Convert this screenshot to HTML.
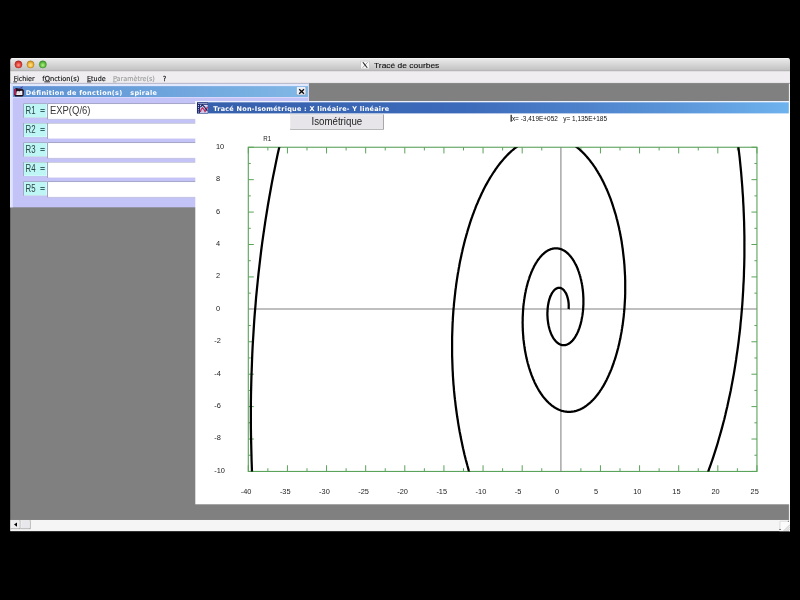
<!DOCTYPE html>
<html lang="fr">
<head>
<meta charset="utf-8">
<title>Tracé de courbes</title>
<style>
html,body{margin:0;padding:0;background:#000;}
body{width:800px;height:600px;overflow:hidden;font-family:"Liberation Sans",sans-serif;}
svg{display:block;will-change:transform;}
</style>
</head>
<body>
<svg width="800" height="600" viewBox="0 0 800 600">
<defs>
<linearGradient id="gtb" x1="0" y1="0" x2="0" y2="1"><stop offset="0" stop-color="#ececec"/><stop offset="0.45" stop-color="#d8d8d8"/><stop offset="1" stop-color="#bfbfbf"/></linearGradient>
<linearGradient id="gc1" x1="0" y1="0" x2="1" y2="0"><stop offset="0" stop-color="#5b8fd2"/><stop offset="1" stop-color="#80b8e6"/></linearGradient>
<linearGradient id="gc2" x1="0" y1="0" x2="1" y2="0"><stop offset="0" stop-color="#3660ac"/><stop offset="0.45" stop-color="#3c6aba"/><stop offset="0.8" stop-color="#5a94d8"/><stop offset="1" stop-color="#6eb2ee"/></linearGradient>
<radialGradient id="gr" cx="0.5" cy="0.6" r="0.6"><stop offset="0" stop-color="#ff9a8e"/><stop offset="0.55" stop-color="#e8443a"/><stop offset="1" stop-color="#b02a22"/></radialGradient>
<radialGradient id="gy" cx="0.5" cy="0.6" r="0.6"><stop offset="0" stop-color="#ffe690"/><stop offset="0.55" stop-color="#f2b83c"/><stop offset="1" stop-color="#bc8a22"/></radialGradient>
<radialGradient id="gg" cx="0.5" cy="0.6" r="0.6"><stop offset="0" stop-color="#bcf290"/><stop offset="0.55" stop-color="#64c442"/><stop offset="1" stop-color="#3e922a"/></radialGradient>
<clipPath id="fc"><rect x="248.30" y="147.25" width="508.65" height="324.20"/></clipPath>
<clipPath id="wc"><path d="M10.1 531.4 V60.4 Q10.1 57.9 12.6 57.9 H787.5 Q790 57.9 790 60.4 V531.4 Z"/></clipPath>
</defs>
<rect x="0.00" y="0.00" width="800.00" height="600.00" fill="#000" />
<g clip-path="url(#wc)">
<rect x="10.10" y="57.90" width="779.90" height="13.10" fill="url(#gtb)" />
<rect x="10.10" y="57.90" width="779.90" height="0.80" fill="#f6f6f6" />
<rect x="10.10" y="71.00" width="779.90" height="12.20" fill="#efedf0" />
<rect x="10.10" y="70.60" width="779.90" height="0.60" fill="#a8a8a8" />
<rect x="10.10" y="83.20" width="779.90" height="436.60" fill="#808080" />
<rect x="10.10" y="82.90" width="779.90" height="0.70" fill="#9a9a9a" />
<rect x="788.90" y="83.60" width="1.30" height="447.80" fill="#ededed" />
<rect x="10.10" y="519.80" width="780.10" height="11.60" fill="#f5f5f5" />
<circle cx="18.45" cy="64.4" r="3.55" fill="url(#gr)" stroke="#9c2a22" stroke-width="0.5"/>
<circle cx="30.50" cy="64.4" r="3.55" fill="url(#gy)" stroke="#a87c20" stroke-width="0.5"/>
<circle cx="42.80" cy="64.4" r="3.55" fill="url(#gg)" stroke="#3c8428" stroke-width="0.5"/>
<rect x="360.80" y="61.10" width="8.40" height="7.80" fill="#f8f8f8" stroke="#b8b8b8" stroke-width="0.5"/>
<path d="M362.3 62.3 L363.6 62.3 L367.8 67.8 L366.5 67.8 Z" fill="#222"/>
<path d="M367.6 62.3 L362.5 67.8" stroke="#333" stroke-width="0.45" fill="none"/>
<text x="374.00" y="67.60" font-family="'Liberation Sans', sans-serif" font-size="8.00" font-weight="normal" fill="#111" textLength="65.30" lengthAdjust="spacingAndGlyphs" stroke="#111" stroke-width="0.12">Tracé de courbes</text>
<text x="13.80" y="80.50" font-family="'DejaVu Sans Condensed', 'DejaVu Sans', sans-serif" font-size="6.9" fill="#111" stroke="#111" stroke-width="0.14" textLength="20.90" lengthAdjust="spacingAndGlyphs"><tspan text-decoration="underline">F</tspan>ichier</text>
<text x="42.35" y="80.50" font-family="'DejaVu Sans Condensed', 'DejaVu Sans', sans-serif" font-size="6.9" fill="#111" stroke="#111" stroke-width="0.14" textLength="36.90" lengthAdjust="spacingAndGlyphs">f<tspan text-decoration="underline">O</tspan>nction(s)</text>
<text x="87.10" y="80.50" font-family="'DejaVu Sans Condensed', 'DejaVu Sans', sans-serif" font-size="6.9" fill="#111" stroke="#111" stroke-width="0.14" textLength="18.50" lengthAdjust="spacingAndGlyphs"><tspan text-decoration="underline">E</tspan>tude</text>
<text x="113.00" y="80.50" font-family="'DejaVu Sans Condensed', 'DejaVu Sans', sans-serif" font-size="6.9" fill="#9e9e9e" stroke="#9e9e9e" stroke-width="0.14" textLength="41.80" lengthAdjust="spacingAndGlyphs"><tspan text-decoration="underline">P</tspan>aramètre(s)</text>
<text x="163.00" y="80.50" font-family="'DejaVu Sans Condensed', 'DejaVu Sans', sans-serif" font-size="6.90" font-weight="normal" fill="#222" stroke="#222" stroke-width="0.25">?</text>
<rect x="10.10" y="83.60" width="298.90" height="123.70" fill="#c3c3f8" />
<rect x="10.10" y="83.60" width="298.90" height="2.70" fill="#e2e9fc" />
<rect x="10.10" y="83.60" width="2.80" height="123.70" fill="#dbe1fb" />
<rect x="10.10" y="83.60" width="1.10" height="123.70" fill="#e6eafc" />
<rect x="308.00" y="83.60" width="1.00" height="123.70" fill="#d4d8fa" />
<rect x="12.90" y="86.20" width="295.10" height="10.90" fill="url(#gc1)" />
<rect x="12.90" y="97.10" width="295.10" height="0.90" fill="#dcdcfb" />
<g>
<path d="M14.0 89.4 L16.1 88.1 L18.5 88.5 L22.4 88.7 L23.9 90.5 L23.7 95.2 L22.3 96.4 L15.2 96.4 L14.0 94.6 Z" fill="#21101c"/>
<path d="M14.15 89.6 L15.9 88.6 L16.0 94.9 L15.0 95.1 L14.15 94.0 Z" fill="#b4225e"/>
<path d="M16.7 91.2 L22.3 90.7 L22.4 94.9 L16.2 95.1 Z" fill="#f6f0f6"/>
<path d="M19.0 88.9 L22.7 86.8" stroke="#5a32a0" stroke-width="1"/>
<circle cx="19.3" cy="90.8" r="0.7" fill="#140a18"/>
<path d="M17.2 93.4 L19.4 92.6 L20.6 93.6" stroke="#b8a8b8" stroke-width="0.5" fill="none"/>
</g>
<text x="25.85" y="94.50" font-family="'DejaVu Sans', 'Liberation Sans', sans-serif" font-size="6.50" font-weight="bold" fill="#fff" textLength="131.15" lengthAdjust="spacing" xml:space="preserve">Définition de fonction(s)   spirale</text>
<rect x="296.85" y="87.10" width="9.30" height="8.10" fill="#7c8ca8" />
<rect x="296.85" y="87.10" width="8.55" height="7.35" fill="#fbfbff" />
<rect x="297.50" y="87.70" width="7.90" height="6.75" fill="#ececf4" />
<path d="M299.2 89.3 L304 93.7 M304 89.3 L299.2 93.7" stroke="#0a0a0a" stroke-width="1.35" fill="none"/>
<rect x="23.40" y="103.50" width="23.60" height="14.10" fill="#8c9ca0" />
<rect x="24.00" y="104.10" width="23.00" height="13.50" fill="#e4ffff" />
<rect x="24.00" y="104.10" width="22.50" height="13.00" fill="#bef6f6" />
<text font-family="'Liberation Sans', sans-serif" fill="#2a4444"><tspan x="25.5" y="113.75" font-size="10.4" textLength="10" lengthAdjust="spacingAndGlyphs">R1</tspan><tspan x="40.2" y="112.60" font-size="8" fill="#3c6464" stroke="#3c6464" stroke-width="0.35" textLength="4.6" lengthAdjust="spacingAndGlyphs">=</tspan></text>
<rect x="47.40" y="103.50" width="259.00" height="15.90" fill="#8c8c9c" />
<rect x="48.10" y="104.10" width="258.30" height="15.30" fill="#ececff" />
<rect x="48.10" y="104.10" width="257.70" height="14.50" fill="#ffffff" />
<text x="49.90" y="114.25" font-family="'Liberation Sans', sans-serif" font-size="10.10" font-weight="normal" fill="#383838" textLength="40.60" lengthAdjust="spacingAndGlyphs" >EXP(Q/6)</text>
<rect x="23.40" y="123.00" width="23.60" height="14.10" fill="#8c9ca0" />
<rect x="24.00" y="123.60" width="23.00" height="13.50" fill="#e4ffff" />
<rect x="24.00" y="123.60" width="22.50" height="13.00" fill="#bef6f6" />
<text font-family="'Liberation Sans', sans-serif" fill="#2a4444"><tspan x="25.5" y="133.25" font-size="10.4" textLength="10" lengthAdjust="spacingAndGlyphs">R2</tspan><tspan x="40.2" y="132.10" font-size="8" fill="#3c6464" stroke="#3c6464" stroke-width="0.35" textLength="4.6" lengthAdjust="spacingAndGlyphs">=</tspan></text>
<rect x="47.40" y="123.00" width="259.00" height="15.90" fill="#8c8c9c" />
<rect x="48.10" y="123.60" width="258.30" height="15.30" fill="#ececff" />
<rect x="48.10" y="123.60" width="257.70" height="14.50" fill="#ffffff" />
<rect x="23.40" y="142.50" width="23.60" height="14.10" fill="#8c9ca0" />
<rect x="24.00" y="143.10" width="23.00" height="13.50" fill="#e4ffff" />
<rect x="24.00" y="143.10" width="22.50" height="13.00" fill="#bef6f6" />
<text font-family="'Liberation Sans', sans-serif" fill="#2a4444"><tspan x="25.5" y="152.75" font-size="10.4" textLength="10" lengthAdjust="spacingAndGlyphs">R3</tspan><tspan x="40.2" y="151.60" font-size="8" fill="#3c6464" stroke="#3c6464" stroke-width="0.35" textLength="4.6" lengthAdjust="spacingAndGlyphs">=</tspan></text>
<rect x="47.40" y="142.50" width="259.00" height="15.90" fill="#8c8c9c" />
<rect x="48.10" y="143.10" width="258.30" height="15.30" fill="#ececff" />
<rect x="48.10" y="143.10" width="257.70" height="14.50" fill="#ffffff" />
<rect x="23.40" y="162.00" width="23.60" height="14.10" fill="#8c9ca0" />
<rect x="24.00" y="162.60" width="23.00" height="13.50" fill="#e4ffff" />
<rect x="24.00" y="162.60" width="22.50" height="13.00" fill="#bef6f6" />
<text font-family="'Liberation Sans', sans-serif" fill="#2a4444"><tspan x="25.5" y="172.25" font-size="10.4" textLength="10" lengthAdjust="spacingAndGlyphs">R4</tspan><tspan x="40.2" y="171.10" font-size="8" fill="#3c6464" stroke="#3c6464" stroke-width="0.35" textLength="4.6" lengthAdjust="spacingAndGlyphs">=</tspan></text>
<rect x="47.40" y="162.00" width="259.00" height="15.90" fill="#8c8c9c" />
<rect x="48.10" y="162.60" width="258.30" height="15.30" fill="#ececff" />
<rect x="48.10" y="162.60" width="257.70" height="14.50" fill="#ffffff" />
<rect x="23.40" y="181.50" width="23.60" height="14.10" fill="#8c9ca0" />
<rect x="24.00" y="182.10" width="23.00" height="13.50" fill="#e4ffff" />
<rect x="24.00" y="182.10" width="22.50" height="13.00" fill="#bef6f6" />
<text font-family="'Liberation Sans', sans-serif" fill="#2a4444"><tspan x="25.5" y="191.75" font-size="10.4" textLength="10" lengthAdjust="spacingAndGlyphs">R5</tspan><tspan x="40.2" y="190.60" font-size="8" fill="#3c6464" stroke="#3c6464" stroke-width="0.35" textLength="4.6" lengthAdjust="spacingAndGlyphs">=</tspan></text>
<rect x="47.40" y="181.50" width="259.00" height="15.90" fill="#8c8c9c" />
<rect x="48.10" y="182.10" width="258.30" height="15.30" fill="#ececff" />
<rect x="48.10" y="182.10" width="257.70" height="14.50" fill="#ffffff" />
<rect x="195.30" y="101.00" width="594.90" height="403.30" fill="#ffffff" />
<rect x="195.30" y="101.00" width="594.90" height="1.30" fill="#eef2fc" />
<rect x="196.95" y="102.30" width="591.85" height="11.10" fill="url(#gc2)" />
<rect x="197.00" y="102.40" width="10.90" height="11.00" fill="#1c2a72" />
<rect x="198.00" y="102.90" width="9.60" height="1.10" fill="#8a98c0" />
<rect x="200.00" y="105.00" width="7.70" height="8.00" fill="#c8c8ec" />
<rect x="198.00" y="105.00" width="1.00" height="0.80" fill="#e8ecff" />
<rect x="198.00" y="107.20" width="1.00" height="0.80" fill="#e8ecff" />
<rect x="198.00" y="109.40" width="1.00" height="0.80" fill="#e8ecff" />
<rect x="198.00" y="111.60" width="1.00" height="0.80" fill="#e8ecff" />
<rect x="200.00" y="104.80" width="7.60" height="0.80" fill="#e8ecff" />
<path d="M200.3 112 L201.2 109.4 L202.6 108 L204 109.6 L205 111.6 L206 110 L207.4 107" stroke="#c02c58" stroke-width="1.2" fill="none"/>
<path d="M200.4 107.2 L202.4 104.8 L204.6 107 L206.4 109.8 L207.4 110.6" stroke="#18205e" stroke-width="1.1" fill="none"/>
<text x="213.20" y="111.00" font-family="'DejaVu Sans', 'Liberation Sans', sans-serif" font-size="6.50" font-weight="bold" fill="#fff" textLength="176.00" lengthAdjust="spacing" >Tracé Non-Isométrique : X linéaire- Y linéaire</text>
<rect x="290.20" y="114.50" width="93.70" height="15.10" fill="#8c8c8c" />
<rect x="290.20" y="114.50" width="92.90" height="14.30" fill="#ffffff" />
<rect x="290.90" y="115.20" width="92.20" height="13.60" fill="#e7e5ea" />
<text x="311.50" y="125.00" font-family="'Liberation Sans', sans-serif" font-size="10.40" font-weight="normal" fill="#222" textLength="50.70" lengthAdjust="spacingAndGlyphs" >Isométrique</text>
<rect x="510.60" y="114.80" width="1.10" height="6.90" fill="#000" />
<text x="511.90" y="120.80" font-family="'Liberation Sans', sans-serif" font-size="6.90" font-weight="normal" fill="#111" textLength="95.10" lengthAdjust="spacingAndGlyphs" xml:space="preserve">x= -3,419E+052   y= 1,135E+185</text>
<path d="M248.30 147.25 v6.2 M248.30 471.45 v-6.2 M267.86 147.25 v3.2 M267.86 471.45 v-3.2 M287.43 147.25 v6.2 M287.43 471.45 v-6.2 M306.99 147.25 v3.2 M306.99 471.45 v-3.2 M326.55 147.25 v6.2 M326.55 471.45 v-6.2 M346.12 147.25 v3.2 M346.12 471.45 v-3.2 M365.68 147.25 v6.2 M365.68 471.45 v-6.2 M385.24 147.25 v3.2 M385.24 471.45 v-3.2 M404.81 147.25 v6.2 M404.81 471.45 v-6.2 M424.37 147.25 v3.2 M424.37 471.45 v-3.2 M443.93 147.25 v6.2 M443.93 471.45 v-6.2 M463.50 147.25 v3.2 M463.50 471.45 v-3.2 M483.06 147.25 v6.2 M483.06 471.45 v-6.2 M502.62 147.25 v3.2 M502.62 471.45 v-3.2 M522.19 147.25 v6.2 M522.19 471.45 v-6.2 M541.75 147.25 v3.2 M541.75 471.45 v-3.2 M580.88 147.25 v3.2 M580.88 471.45 v-3.2 M600.44 147.25 v6.2 M600.44 471.45 v-6.2 M620.01 147.25 v3.2 M620.01 471.45 v-3.2 M639.57 147.25 v6.2 M639.57 471.45 v-6.2 M659.13 147.25 v3.2 M659.13 471.45 v-3.2 M678.70 147.25 v6.2 M678.70 471.45 v-6.2 M698.26 147.25 v3.2 M698.26 471.45 v-3.2 M717.82 147.25 v6.2 M717.82 471.45 v-6.2 M737.39 147.25 v3.2 M737.39 471.45 v-3.2 M756.95 147.25 v6.2 M756.95 471.45 v-6.2 M248.30 471.45 h5.5 M756.95 471.45 h-5.5 M248.30 455.24 h2.5 M756.95 455.24 h-2.5 M248.30 439.03 h5.5 M756.95 439.03 h-5.5 M248.30 422.82 h2.5 M756.95 422.82 h-2.5 M248.30 406.61 h5.5 M756.95 406.61 h-5.5 M248.30 390.40 h2.5 M756.95 390.40 h-2.5 M248.30 374.19 h5.5 M756.95 374.19 h-5.5 M248.30 357.98 h2.5 M756.95 357.98 h-2.5 M248.30 341.77 h5.5 M756.95 341.77 h-5.5 M248.30 325.56 h2.5 M756.95 325.56 h-2.5 M248.30 293.14 h2.5 M756.95 293.14 h-2.5 M248.30 276.93 h5.5 M756.95 276.93 h-5.5 M248.30 260.72 h2.5 M756.95 260.72 h-2.5 M248.30 244.51 h5.5 M756.95 244.51 h-5.5 M248.30 228.30 h2.5 M756.95 228.30 h-2.5 M248.30 212.09 h5.5 M756.95 212.09 h-5.5 M248.30 195.88 h2.5 M756.95 195.88 h-2.5 M248.30 179.67 h5.5 M756.95 179.67 h-5.5 M248.30 163.46 h2.5 M756.95 163.46 h-2.5 M248.30 147.25 h5.5 M756.95 147.25 h-5.5" stroke="#5aa35a" stroke-width="1" fill="none"/>
<rect x="248.30" y="147.25" width="508.65" height="324.20" fill="none" stroke="#5aa35a" stroke-width="1.1"/>
<line x1="248.30" y1="308.90" x2="756.95" y2="308.90" stroke="#808080" stroke-width="1.05"/>
<line x1="560.92" y1="147.25" x2="560.92" y2="471.45" stroke="#808080" stroke-width="1.05"/>
<g clip-path="url(#fc)"><path d="M569.1 309.3 L569.2 309.1 L569.2 308.9 L569.2 308.7 L569.2 308.5 L569.2 308.3 L569.2 308.1 L569.2 307.9 L569.2 307.7 L569.2 307.5 L569.2 307.3 L569.2 307.1 L569.2 306.9 L569.2 306.6 L569.2 306.4 L569.2 306.2 L569.2 306.0 L569.2 305.8 L569.2 305.6 L569.2 305.4 L569.2 305.1 L569.2 304.9 L569.2 304.7 L569.2 304.5 L569.2 304.3 L569.2 304.1 L569.1 303.9 L569.1 303.6 L569.1 303.4 L569.1 303.2 L569.1 303.0 L569.0 302.8 L569.0 302.6 L569.0 302.4 L569.0 302.1 L568.9 301.9 L568.9 301.7 L568.9 301.5 L568.8 301.3 L568.8 301.1 L568.8 300.9 L568.7 300.6 L568.7 300.4 L568.7 300.2 L568.6 300.0 L568.6 299.8 L568.5 299.6 L568.5 299.4 L568.4 299.2 L568.4 299.0 L568.3 298.8 L568.3 298.6 L568.2 298.4 L568.2 298.2 L568.1 298.0 L568.1 297.8 L568.0 297.6 L568.0 297.4 L567.9 297.2 L567.8 297.0 L567.8 296.8 L567.7 296.6 L567.7 296.4 L567.6 296.2 L567.5 296.0 L567.5 295.8 L567.4 295.6 L567.3 295.4 L567.2 295.3 L567.2 295.1 L567.1 294.9 L567.0 294.7 L566.9 294.5 L566.9 294.4 L566.8 294.2 L566.7 294.0 L566.6 293.8 L566.5 293.7 L566.4 293.5 L566.4 293.3 L566.3 293.2 L566.2 293.0 L566.1 292.8 L566.0 292.7 L565.9 292.5 L565.8 292.4 L565.7 292.2 L565.6 292.1 L565.5 291.9 L565.4 291.8 L565.3 291.6 L565.2 291.5 L565.1 291.4 L565.0 291.2 L564.9 291.1 L564.8 291.0 L564.7 290.8 L564.6 290.7 L564.5 290.6 L564.4 290.5 L564.3 290.3 L564.2 290.2 L564.1 290.1 L564.0 290.0 L563.9 289.9 L563.7 289.8 L563.6 289.7 L563.5 289.6 L563.4 289.5 L563.3 289.4 L563.2 289.3 L563.0 289.2 L562.9 289.1 L562.8 289.0 L562.7 289.0 L562.6 288.9 L562.4 288.8 L562.3 288.7 L562.2 288.7 L562.1 288.6 L561.9 288.5 L561.8 288.5 L561.7 288.4 L561.6 288.4 L561.4 288.3 L561.3 288.3 L561.2 288.2 L561.1 288.2 L560.9 288.2 L560.8 288.1 L560.7 288.1 L560.5 288.1 L560.4 288.1 L560.3 288.0 L560.1 288.0 L560.0 288.0 L559.9 288.0 L559.7 288.0 L559.6 288.0 L559.5 288.0 L559.3 288.0 L559.2 288.0 L559.1 288.0 L558.9 288.0 L558.8 288.1 L558.7 288.1 L558.5 288.1 L558.4 288.1 L558.3 288.2 L558.1 288.2 L558.0 288.2 L557.9 288.3 L557.7 288.3 L557.6 288.4 L557.5 288.4 L557.3 288.5 L557.2 288.6 L557.1 288.6 L556.9 288.7 L556.8 288.8 L556.7 288.8 L556.5 288.9 L556.4 289.0 L556.3 289.1 L556.1 289.2 L556.0 289.3 L555.9 289.4 L555.7 289.5 L555.6 289.6 L555.5 289.7 L555.3 289.8 L555.2 289.9 L555.1 290.0 L554.9 290.2 L554.8 290.3 L554.7 290.4 L554.6 290.6 L554.4 290.7 L554.3 290.8 L554.2 291.0 L554.0 291.1 L553.9 291.3 L553.8 291.5 L553.7 291.6 L553.5 291.8 L553.4 291.9 L553.3 292.1 L553.2 292.3 L553.1 292.5 L552.9 292.6 L552.8 292.8 L552.7 293.0 L552.6 293.2 L552.5 293.4 L552.4 293.6 L552.2 293.8 L552.1 294.0 L552.0 294.2 L551.9 294.4 L551.8 294.6 L551.7 294.9 L551.6 295.1 L551.5 295.3 L551.4 295.5 L551.3 295.8 L551.2 296.0 L551.1 296.2 L551.0 296.5 L550.9 296.7 L550.8 297.0 L550.7 297.2 L550.6 297.5 L550.5 297.7 L550.4 298.0 L550.3 298.3 L550.2 298.5 L550.1 298.8 L550.0 299.1 L549.9 299.3 L549.9 299.6 L549.8 299.9 L549.7 300.2 L549.6 300.5 L549.5 300.7 L549.5 301.0 L549.4 301.3 L549.3 301.6 L549.2 301.9 L549.2 302.2 L549.1 302.5 L549.0 302.8 L549.0 303.1 L548.9 303.4 L548.9 303.8 L548.8 304.1 L548.7 304.4 L548.7 304.7 L548.6 305.0 L548.6 305.3 L548.5 305.7 L548.5 306.0 L548.4 306.3 L548.4 306.6 L548.3 307.0 L548.3 307.3 L548.3 307.6 L548.2 308.0 L548.2 308.3 L548.2 308.7 L548.1 309.0 L548.1 309.3 L548.1 309.7 L548.1 310.0 L548.0 310.4 L548.0 310.7 L548.0 311.1 L548.0 311.4 L548.0 311.8 L548.0 312.1 L547.9 312.5 L547.9 312.9 L547.9 313.2 L547.9 313.6 L547.9 313.9 L547.9 314.3 L547.9 314.6 L547.9 315.0 L547.9 315.4 L547.9 315.7 L548.0 316.1 L548.0 316.4 L548.0 316.8 L548.0 317.2 L548.0 317.5 L548.1 317.9 L548.1 318.3 L548.1 318.6 L548.1 319.0 L548.2 319.4 L548.2 319.7 L548.2 320.1 L548.3 320.4 L548.3 320.8 L548.4 321.2 L548.4 321.5 L548.5 321.9 L548.5 322.2 L548.6 322.6 L548.6 323.0 L548.7 323.3 L548.7 323.7 L548.8 324.0 L548.9 324.4 L548.9 324.8 L549.0 325.1 L549.1 325.5 L549.1 325.8 L549.2 326.2 L549.3 326.5 L549.4 326.9 L549.4 327.2 L549.5 327.6 L549.6 327.9 L549.7 328.2 L549.8 328.6 L549.9 328.9 L550.0 329.3 L550.1 329.6 L550.2 329.9 L550.3 330.3 L550.4 330.6 L550.5 330.9 L550.6 331.2 L550.7 331.6 L550.8 331.9 L551.0 332.2 L551.1 332.5 L551.2 332.8 L551.3 333.1 L551.4 333.5 L551.6 333.8 L551.7 334.1 L551.8 334.4 L552.0 334.7 L552.1 335.0 L552.2 335.3 L552.4 335.5 L552.5 335.8 L552.7 336.1 L552.8 336.4 L552.9 336.7 L553.1 336.9 L553.2 337.2 L553.4 337.5 L553.6 337.7 L553.7 338.0 L553.9 338.3 L554.0 338.5 L554.2 338.8 L554.4 339.0 L554.5 339.2 L554.7 339.5 L554.9 339.7 L555.0 339.9 L555.2 340.2 L555.4 340.4 L555.6 340.6 L555.7 340.8 L555.9 341.0 L556.1 341.2 L556.3 341.4 L556.5 341.6 L556.7 341.8 L556.8 342.0 L557.0 342.2 L557.2 342.4 L557.4 342.5 L557.6 342.7 L557.8 342.9 L558.0 343.0 L558.2 343.2 L558.4 343.3 L558.6 343.5 L558.8 343.6 L559.0 343.8 L559.2 343.9 L559.4 344.0 L559.6 344.1 L559.8 344.3 L560.0 344.4 L560.2 344.5 L560.5 344.6 L560.7 344.7 L560.9 344.7 L561.1 344.8 L561.3 344.9 L561.5 345.0 L561.7 345.0 L562.0 345.1 L562.2 345.2 L562.4 345.2 L562.6 345.3 L562.8 345.3 L563.1 345.3 L563.3 345.3 L563.5 345.4 L563.7 345.4 L564.0 345.4 L564.2 345.4 L564.4 345.4 L564.6 345.4 L564.9 345.4 L565.1 345.4 L565.3 345.3 L565.5 345.3 L565.8 345.3 L566.0 345.2 L566.2 345.2 L566.4 345.1 L566.7 345.0 L566.9 345.0 L567.1 344.9 L567.4 344.8 L567.6 344.7 L567.8 344.6 L568.0 344.6 L568.3 344.4 L568.5 344.3 L568.7 344.2 L569.0 344.1 L569.2 344.0 L569.4 343.8 L569.6 343.7 L569.9 343.5 L570.1 343.4 L570.3 343.2 L570.5 343.1 L570.8 342.9 L571.0 342.7 L571.2 342.5 L571.4 342.3 L571.6 342.1 L571.9 341.9 L572.1 341.7 L572.3 341.5 L572.5 341.3 L572.7 341.1 L572.9 340.8 L573.2 340.6 L573.4 340.3 L573.6 340.1 L573.8 339.8 L574.0 339.6 L574.2 339.3 L574.4 339.0 L574.6 338.7 L574.8 338.4 L575.0 338.2 L575.3 337.9 L575.5 337.5 L575.7 337.2 L575.8 336.9 L576.0 336.6 L576.2 336.3 L576.4 335.9 L576.6 335.6 L576.8 335.2 L577.0 334.9 L577.2 334.5 L577.4 334.2 L577.6 333.8 L577.7 333.4 L577.9 333.0 L578.1 332.7 L578.3 332.3 L578.5 331.9 L578.6 331.5 L578.8 331.1 L579.0 330.7 L579.1 330.2 L579.3 329.8 L579.4 329.4 L579.6 329.0 L579.8 328.5 L579.9 328.1 L580.1 327.6 L580.2 327.2 L580.4 326.7 L580.5 326.3 L580.6 325.8 L580.8 325.3 L580.9 324.8 L581.1 324.4 L581.2 323.9 L581.3 323.4 L581.4 322.9 L581.6 322.4 L581.7 321.9 L581.8 321.4 L581.9 320.9 L582.0 320.4 L582.1 319.8 L582.2 319.3 L582.3 318.8 L582.4 318.3 L582.5 317.7 L582.6 317.2 L582.7 316.7 L582.8 316.1 L582.9 315.6 L583.0 315.0 L583.1 314.5 L583.1 313.9 L583.2 313.3 L583.3 312.8 L583.3 312.2 L583.4 311.7 L583.5 311.1 L583.5 310.5 L583.6 309.9 L583.6 309.3 L583.7 308.8 L583.7 308.2 L583.7 307.6 L583.8 307.0 L583.8 306.4 L583.8 305.8 L583.9 305.2 L583.9 304.6 L583.9 304.0 L583.9 303.4 L583.9 302.8 L583.9 302.2 L583.9 301.6 L583.9 301.0 L583.9 300.4 L583.9 299.8 L583.9 299.2 L583.9 298.6 L583.9 298.0 L583.8 297.4 L583.8 296.8 L583.8 296.1 L583.7 295.5 L583.7 294.9 L583.7 294.3 L583.6 293.7 L583.6 293.1 L583.5 292.5 L583.5 291.9 L583.4 291.2 L583.3 290.6 L583.3 290.0 L583.2 289.4 L583.1 288.8 L583.0 288.2 L582.9 287.6 L582.9 287.0 L582.8 286.4 L582.7 285.8 L582.6 285.2 L582.5 284.5 L582.4 283.9 L582.2 283.3 L582.1 282.7 L582.0 282.2 L581.9 281.6 L581.8 281.0 L581.6 280.4 L581.5 279.8 L581.3 279.2 L581.2 278.6 L581.1 278.0 L580.9 277.5 L580.8 276.9 L580.6 276.3 L580.4 275.7 L580.3 275.2 L580.1 274.6 L579.9 274.1 L579.7 273.5 L579.6 272.9 L579.4 272.4 L579.2 271.8 L579.0 271.3 L578.8 270.8 L578.6 270.2 L578.4 269.7 L578.2 269.2 L578.0 268.7 L577.8 268.1 L577.6 267.6 L577.3 267.1 L577.1 266.6 L576.9 266.1 L576.7 265.6 L576.4 265.1 L576.2 264.7 L575.9 264.2 L575.7 263.7 L575.4 263.2 L575.2 262.8 L574.9 262.3 L574.7 261.9 L574.4 261.4 L574.2 261.0 L573.9 260.6 L573.6 260.1 L573.3 259.7 L573.1 259.3 L572.8 258.9 L572.5 258.5 L572.2 258.1 L571.9 257.7 L571.6 257.3 L571.3 256.9 L571.0 256.6 L570.7 256.2 L570.4 255.9 L570.1 255.5 L569.8 255.2 L569.5 254.9 L569.2 254.5 L568.9 254.2 L568.5 253.9 L568.2 253.6 L567.9 253.3 L567.6 253.0 L567.2 252.7 L566.9 252.5 L566.6 252.2 L566.2 252.0 L565.9 251.7 L565.6 251.5 L565.2 251.3 L564.9 251.0 L564.5 250.8 L564.2 250.6 L563.8 250.4 L563.5 250.3 L563.1 250.1 L562.8 249.9 L562.4 249.8 L562.0 249.6 L561.7 249.5 L561.3 249.3 L561.0 249.2 L560.6 249.1 L560.2 249.0 L559.8 248.9 L559.5 248.8 L559.1 248.7 L558.7 248.7 L558.4 248.6 L558.0 248.6 L557.6 248.5 L557.2 248.5 L556.9 248.5 L556.5 248.5 L556.1 248.5 L555.7 248.5 L555.3 248.5 L555.0 248.6 L554.6 248.6 L554.2 248.7 L553.8 248.7 L553.4 248.8 L553.0 248.9 L552.6 249.0 L552.3 249.1 L551.9 249.2 L551.5 249.3 L551.1 249.5 L550.7 249.6 L550.3 249.8 L550.0 249.9 L549.6 250.1 L549.2 250.3 L548.8 250.5 L548.4 250.7 L548.0 250.9 L547.7 251.1 L547.3 251.4 L546.9 251.6 L546.5 251.9 L546.1 252.2 L545.8 252.4 L545.4 252.7 L545.0 253.0 L544.6 253.3 L544.3 253.7 L543.9 254.0 L543.5 254.3 L543.1 254.7 L542.8 255.1 L542.4 255.4 L542.0 255.8 L541.7 256.2 L541.3 256.6 L541.0 257.0 L540.6 257.5 L540.2 257.9 L539.9 258.3 L539.5 258.8 L539.2 259.3 L538.8 259.7 L538.5 260.2 L538.1 260.7 L537.8 261.2 L537.5 261.7 L537.1 262.3 L536.8 262.8 L536.4 263.4 L536.1 263.9 L535.8 264.5 L535.5 265.1 L535.1 265.6 L534.8 266.2 L534.5 266.8 L534.2 267.4 L533.9 268.1 L533.6 268.7 L533.3 269.3 L533.0 270.0 L532.7 270.7 L532.4 271.3 L532.1 272.0 L531.8 272.7 L531.5 273.4 L531.3 274.1 L531.0 274.8 L530.7 275.5 L530.4 276.3 L530.2 277.0 L529.9 277.7 L529.7 278.5 L529.4 279.3 L529.2 280.0 L528.9 280.8 L528.7 281.6 L528.4 282.4 L528.2 283.2 L528.0 284.0 L527.8 284.8 L527.6 285.6 L527.3 286.5 L527.1 287.3 L526.9 288.2 L526.7 289.0 L526.5 289.9 L526.3 290.8 L526.2 291.6 L526.0 292.5 L525.8 293.4 L525.6 294.3 L525.5 295.2 L525.3 296.1 L525.2 297.0 L525.0 297.9 L524.9 298.9 L524.7 299.8 L524.6 300.7 L524.5 301.7 L524.4 302.6 L524.2 303.5 L524.1 304.5 L524.0 305.5 L523.9 306.4 L523.8 307.4 L523.8 308.4 L523.7 309.3 L523.6 310.3 L523.5 311.3 L523.5 312.3 L523.4 313.3 L523.4 314.3 L523.3 315.3 L523.3 316.3 L523.2 317.3 L523.2 318.3 L523.2 319.3 L523.2 320.3 L523.2 321.4 L523.1 322.4 L523.1 323.4 L523.2 324.4 L523.2 325.5 L523.2 326.5 L523.2 327.5 L523.3 328.5 L523.3 329.6 L523.3 330.6 L523.4 331.6 L523.5 332.7 L523.5 333.7 L523.6 334.7 L523.7 335.8 L523.8 336.8 L523.8 337.8 L523.9 338.9 L524.0 339.9 L524.2 341.0 L524.3 342.0 L524.4 343.0 L524.5 344.0 L524.7 345.1 L524.8 346.1 L525.0 347.1 L525.1 348.2 L525.3 349.2 L525.4 350.2 L525.6 351.2 L525.8 352.2 L526.0 353.2 L526.2 354.3 L526.4 355.3 L526.6 356.3 L526.8 357.3 L527.0 358.3 L527.3 359.3 L527.5 360.2 L527.7 361.2 L528.0 362.2 L528.2 363.2 L528.5 364.2 L528.8 365.1 L529.0 366.1 L529.3 367.0 L529.6 368.0 L529.9 368.9 L530.2 369.9 L530.5 370.8 L530.8 371.7 L531.1 372.7 L531.5 373.6 L531.8 374.5 L532.1 375.4 L532.5 376.3 L532.8 377.2 L533.2 378.0 L533.5 378.9 L533.9 379.8 L534.3 380.6 L534.7 381.5 L535.0 382.3 L535.4 383.2 L535.8 384.0 L536.2 384.8 L536.6 385.6 L537.0 386.4 L537.5 387.2 L537.9 388.0 L538.3 388.7 L538.8 389.5 L539.2 390.3 L539.6 391.0 L540.1 391.7 L540.6 392.4 L541.0 393.2 L541.5 393.9 L542.0 394.5 L542.4 395.2 L542.9 395.9 L543.4 396.5 L543.9 397.2 L544.4 397.8 L544.9 398.4 L545.4 399.0 L545.9 399.6 L546.5 400.2 L547.0 400.8 L547.5 401.3 L548.0 401.9 L548.6 402.4 L549.1 402.9 L549.7 403.5 L550.2 403.9 L550.8 404.4 L551.3 404.9 L551.9 405.4 L552.4 405.8 L553.0 406.2 L553.6 406.6 L554.2 407.0 L554.7 407.4 L555.3 407.8 L555.9 408.1 L556.5 408.5 L557.1 408.8 L557.7 409.1 L558.3 409.4 L558.9 409.7 L559.5 410.0 L560.1 410.2 L560.7 410.4 L561.3 410.7 L561.9 410.9 L562.5 411.1 L563.2 411.2 L563.8 411.4 L564.4 411.5 L565.0 411.7 L565.7 411.8 L566.3 411.9 L566.9 411.9 L567.6 412.0 L568.2 412.0 L568.8 412.1 L569.5 412.1 L570.1 412.1 L570.8 412.0 L571.4 412.0 L572.1 411.9 L572.7 411.9 L573.4 411.8 L574.0 411.7 L574.6 411.6 L575.3 411.4 L575.9 411.3 L576.6 411.1 L577.2 410.9 L577.9 410.7 L578.5 410.4 L579.2 410.2 L579.8 409.9 L580.5 409.7 L581.1 409.4 L581.8 409.0 L582.4 408.7 L583.1 408.4 L583.7 408.0 L584.4 407.6 L585.0 407.2 L585.7 406.8 L586.3 406.3 L586.9 405.9 L587.6 405.4 L588.2 404.9 L588.8 404.4 L589.5 403.9 L590.1 403.3 L590.7 402.8 L591.4 402.2 L592.0 401.6 L592.6 401.0 L593.2 400.4 L593.9 399.7 L594.5 399.0 L595.1 398.4 L595.7 397.7 L596.3 396.9 L596.9 396.2 L597.5 395.5 L598.1 394.7 L598.7 393.9 L599.3 393.1 L599.9 392.3 L600.4 391.4 L601.0 390.6 L601.6 389.7 L602.2 388.8 L602.7 387.9 L603.3 387.0 L603.9 386.1 L604.4 385.1 L605.0 384.1 L605.5 383.1 L606.0 382.1 L606.6 381.1 L607.1 380.1 L607.6 379.0 L608.1 378.0 L608.6 376.9 L609.1 375.8 L609.6 374.7 L610.1 373.5 L610.6 372.4 L611.1 371.2 L611.6 370.1 L612.1 368.9 L612.5 367.7 L613.0 366.5 L613.4 365.2 L613.9 364.0 L614.3 362.7 L614.7 361.4 L615.2 360.1 L615.6 358.8 L616.0 357.5 L616.4 356.2 L616.8 354.9 L617.2 353.5 L617.6 352.1 L617.9 350.8 L618.3 349.4 L618.7 348.0 L619.0 346.5 L619.4 345.1 L619.7 343.7 L620.0 342.2 L620.3 340.7 L620.7 339.3 L621.0 337.8 L621.2 336.3 L621.5 334.8 L621.8 333.3 L622.1 331.7 L622.3 330.2 L622.6 328.6 L622.8 327.1 L623.1 325.5 L623.3 323.9 L623.5 322.3 L623.7 320.7 L623.9 319.1 L624.1 317.5 L624.3 315.9 L624.4 314.3 L624.6 312.6 L624.7 311.0 L624.9 309.4 L625.0 307.7 L625.1 306.0 L625.2 304.4 L625.3 302.7 L625.4 301.0 L625.5 299.3 L625.6 297.6 L625.6 295.9 L625.7 294.2 L625.7 292.5 L625.7 290.8 L625.7 289.1 L625.7 287.4 L625.7 285.6 L625.7 283.9 L625.7 282.2 L625.7 280.4 L625.6 278.7 L625.6 277.0 L625.5 275.2 L625.4 273.5 L625.3 271.7 L625.2 270.0 L625.1 268.2 L625.0 266.5 L624.9 264.7 L624.7 263.0 L624.6 261.2 L624.4 259.5 L624.2 257.8 L624.0 256.0 L623.8 254.3 L623.6 252.5 L623.4 250.8 L623.2 249.0 L622.9 247.3 L622.7 245.6 L622.4 243.8 L622.2 242.1 L621.9 240.4 L621.6 238.7 L621.3 237.0 L620.9 235.3 L620.6 233.5 L620.3 231.8 L619.9 230.2 L619.6 228.5 L619.2 226.8 L618.8 225.1 L618.4 223.4 L618.0 221.8 L617.6 220.1 L617.1 218.5 L616.7 216.8 L616.3 215.2 L615.8 213.6 L615.3 212.0 L614.8 210.4 L614.3 208.8 L613.8 207.2 L613.3 205.6 L612.8 204.0 L612.3 202.5 L611.7 200.9 L611.2 199.4 L610.6 197.9 L610.0 196.4 L609.4 194.9 L608.8 193.4 L608.2 191.9 L607.6 190.4 L607.0 189.0 L606.3 187.6 L605.7 186.1 L605.0 184.7 L604.4 183.4 L603.7 182.0 L603.0 180.6 L602.3 179.3 L601.6 177.9 L600.9 176.6 L600.1 175.3 L599.4 174.0 L598.6 172.8 L597.9 171.5 L597.1 170.3 L596.4 169.1 L595.6 167.9 L594.8 166.7 L594.0 165.5 L593.2 164.4 L592.4 163.3 L591.5 162.2 L590.7 161.1 L589.9 160.0 L589.0 159.0 L588.1 157.9 L587.3 156.9 L586.4 156.0 L585.5 155.0 L584.6 154.0 L583.7 153.1 L582.8 152.2 L581.9 151.3 L581.0 150.5 L580.1 149.7 L579.1 148.8 L578.2 148.1 L577.3 147.3 L576.3 146.5 L575.3 145.8 L574.4 145.1 L573.4 144.5 L572.4 143.8 L571.4 143.2 L570.5 142.6 L569.5 142.0 L568.5 141.5 L567.5 140.9 L566.4 140.4 L565.4 140.0 L564.4 139.5 L563.4 139.1 L562.4 138.7 L561.3 138.3 L560.3 138.0 L559.2 137.7 L558.2 137.4 L557.1 137.1 L556.1 136.9 L555.0 136.7 L554.0 136.5 L552.9 136.3 L551.8 136.2 L550.7 136.1 L549.7 136.0 L548.6 136.0 L547.5 135.9 L546.4 136.0 L545.4 136.0 L544.3 136.1 L543.2 136.2 L542.1 136.3 L541.0 136.4 L539.9 136.6 L538.8 136.8 L537.7 137.1 L536.6 137.3 L535.5 137.6 L534.4 137.9 L533.3 138.3 L532.2 138.7 L531.1 139.1 L530.0 139.5 L529.0 140.0 L527.9 140.5 L526.8 141.1 L525.7 141.6 L524.6 142.2 L523.5 142.8 L522.4 143.5 L521.3 144.2 L520.2 144.9 L519.1 145.6 L518.1 146.4 L517.0 147.2 L515.9 148.0 L514.8 148.9 L513.8 149.8 L512.7 150.7 L511.6 151.6 L510.6 152.6 L509.5 153.6 L508.5 154.6 L507.4 155.7 L506.4 156.8 L505.3 157.9 L504.3 159.1 L503.3 160.3 L502.3 161.5 L501.2 162.7 L500.2 164.0 L499.2 165.3 L498.2 166.6 L497.2 168.0 L496.2 169.4 L495.3 170.8 L494.3 172.2 L493.3 173.7 L492.4 175.2 L491.4 176.7 L490.4 178.3 L489.5 179.9 L488.6 181.5 L487.7 183.1 L486.7 184.8 L485.8 186.5 L484.9 188.2 L484.0 189.9 L483.2 191.7 L482.3 193.5 L481.4 195.4 L480.6 197.2 L479.7 199.1 L478.9 201.0 L478.1 202.9 L477.2 204.9 L476.4 206.9 L475.7 208.9 L474.9 210.9 L474.1 213.0 L473.3 215.0 L472.6 217.1 L471.8 219.3 L471.1 221.4 L470.4 223.6 L469.7 225.8 L469.0 228.0 L468.3 230.3 L467.7 232.5 L467.0 234.8 L466.4 237.1 L465.7 239.5 L465.1 241.8 L464.5 244.2 L463.9 246.6 L463.3 249.0 L462.8 251.4 L462.2 253.9 L461.7 256.4 L461.2 258.8 L460.6 261.4 L460.1 263.9 L459.7 266.4 L459.2 269.0 L458.8 271.6 L458.3 274.2 L457.9 276.8 L457.5 279.4 L457.1 282.1 L456.7 284.7 L456.4 287.4 L456.0 290.1 L455.7 292.8 L455.4 295.5 L455.1 298.3 L454.8 301.0 L454.5 303.8 L454.3 306.6 L454.0 309.3 L453.8 312.1 L453.6 315.0 L453.4 317.8 L453.3 320.6 L453.1 323.4 L453.0 326.3 L452.9 329.2 L452.8 332.0 L452.7 334.9 L452.6 337.8 L452.6 340.7 L452.6 343.6 L452.6 346.5 L452.6 349.4 L452.6 352.3 L452.6 355.2 L452.7 358.2 L452.8 361.1 L452.9 364.0 L453.0 367.0 L453.1 369.9 L453.3 372.9 L453.4 375.8 L453.6 378.8 L453.8 381.7 L454.0 384.7 L454.3 387.6 L454.5 390.6 L454.8 393.5 L455.1 396.5 L455.4 399.4 L455.8 402.3 L456.1 405.3 L456.5 408.2 L456.9 411.2 L457.3 414.1 L457.7 417.0 L458.2 419.9 L458.6 422.8 L459.1 425.8 L459.6 428.7 L460.1 431.6 L460.7 434.4 L461.2 437.3 L461.8 440.2 L462.4 443.0 L463.0 445.9 L463.6 448.7 L464.3 451.6 L464.9 454.4 L465.6 457.2 L466.3 460.0 L467.1 462.8 L467.8 465.5 L468.6 468.3 L469.3 471.0 L470.1 473.7 L471.0 476.5 L471.8 479.2 L472.6 481.8 L473.5 484.5 L474.4 487.1 L475.3 489.8 L476.2 492.4 L477.2 495.0 L478.1 497.5 L479.1 500.1 L480.1 502.6 L481.1 505.1 L482.1 507.6 L483.2 510.1 L484.2 512.5 L485.3 514.9 L486.4 517.3 L487.5 519.7 L487.5 519.7 M687.2 519.6 L688.7 516.8 L690.3 513.9 L691.8 510.9 L693.3 507.9 L694.7 504.9 L696.2 501.8 L697.6 498.7 L699.0 495.5 L700.5 492.3 L701.9 489.0 L703.2 485.7 L704.6 482.4 L705.9 479.0 L707.2 475.5 L708.6 472.1 L709.8 468.6 L711.1 465.0 L712.4 461.4 L713.6 457.8 L714.8 454.1 L716.0 450.4 L717.2 446.6 L718.3 442.9 L719.4 439.0 L720.5 435.2 L721.6 431.3 L722.7 427.3 L723.7 423.4 L724.8 419.4 L725.8 415.3 L726.7 411.2 L727.7 407.1 L728.6 403.0 L729.5 398.8 L730.4 394.6 L731.3 390.4 L732.1 386.1 L732.9 381.8 L733.7 377.5 L734.5 373.1 L735.2 368.7 L735.9 364.3 L736.6 359.9 L737.2 355.4 L737.9 350.9 L738.5 346.4 L739.1 341.8 L739.6 337.3 L740.2 332.7 L740.7 328.0 L741.1 323.4 L741.6 318.7 L742.0 314.1 L742.4 309.4 L742.8 304.6 L743.1 299.9 L743.4 295.1 L743.7 290.3 L743.9 285.5 L744.2 280.7 L744.4 275.9 L744.5 271.1 L744.7 266.2 L744.8 261.3 L744.9 256.5 L744.9 251.6 L744.9 246.7 L744.9 241.7 L744.9 236.8 L744.8 231.9 L744.7 226.9 L744.6 222.0 L744.4 217.0 L744.2 212.1 L744.0 207.1 L743.7 202.1 L743.5 197.2 L743.1 192.2 L742.8 187.2 L742.4 182.2 L742.0 177.2 L741.6 172.3 L741.1 167.3 L740.6 162.3 L740.1 157.3 L739.5 152.4 L738.9 147.4 L738.3 142.4 L737.6 137.5 L736.9 132.5 L736.2 127.6 L735.5 122.7 L734.7 117.8 L733.9 112.8 L733.0 108.0 L732.1 103.1 L731.7 100.6 M291.6 100.2 L289.8 106.9 L288.0 113.5 L286.3 120.3 L284.6 127.1 L282.9 133.9 L281.3 140.8 L279.7 147.8 L278.1 154.8 L276.6 161.9 L275.2 169.0 L273.7 176.2 L272.3 183.4 L271.0 190.7 L269.7 198.0 L268.4 205.4 L267.2 212.9 L266.0 220.3 L264.9 227.9 L263.8 235.4 L262.7 243.0 L261.7 250.7 L260.8 258.4 L259.9 266.1 L259.0 273.9 L258.2 281.7 L257.4 289.6 L256.6 297.5 L256.0 305.4 L255.3 313.3 L254.7 321.3 L254.2 329.3 L253.7 337.4 L253.2 345.5 L252.8 353.6 L252.5 361.7 L252.2 369.9 L251.9 378.1 L251.7 386.3 L251.5 394.5 L251.4 402.8 L251.4 411.0 L251.4 419.3 L251.4 427.6 L251.5 436.0 L251.7 444.3 L251.9 452.6 L252.1 461.0 L252.4 469.4 L252.7 477.8 L253.1 486.1 L253.6 494.5 L254.1 502.9 L254.7 511.3 L255.3 519.7 L255.3 519.7" stroke="#000" stroke-width="2.25" fill="none" stroke-linejoin="round" transform="translate(-0.5,-0.2)"/></g>
<g font-family="'Liberation Sans', sans-serif" font-size="7.4" fill="#222">
<text x="240.8" y="493.9">-40</text>
<text x="279.9" y="493.9">-35</text>
<text x="319.1" y="493.9">-30</text>
<text x="358.2" y="493.9">-25</text>
<text x="397.3" y="493.9">-20</text>
<text x="436.4" y="493.9">-15</text>
<text x="475.6" y="493.9">-10</text>
<text x="514.7" y="493.9">-5</text>
<text x="554.9" y="493.9">0</text>
<text x="594.0" y="493.9">5</text>
<text x="633.2" y="493.9">10</text>
<text x="672.3" y="493.9">15</text>
<text x="711.4" y="493.9">20</text>
<text x="750.6" y="493.9">25</text>
</g>
<g font-family="'Liberation Sans', sans-serif" font-size="7.4" fill="#222">
<text x="214.3" y="472.8">-10</text>
<text x="214.3" y="440.4">-8</text>
<text x="214.3" y="408.0">-6</text>
<text x="214.3" y="375.6">-4</text>
<text x="214.3" y="343.2">-2</text>
<text x="215.9" y="310.7">0</text>
<text x="215.9" y="278.3">2</text>
<text x="215.9" y="245.9">4</text>
<text x="215.9" y="213.5">6</text>
<text x="215.9" y="181.1">8</text>
<text x="215.9" y="148.6">10</text>
</g>
<text x="263.30" y="140.80" font-family="'Liberation Sans', sans-serif" font-size="7.60" font-weight="normal" fill="#222" textLength="7.90" lengthAdjust="spacingAndGlyphs" >R1</text>
<rect x="10.75" y="520.25" width="9.55" height="8.85" fill="#909090" />
<rect x="10.75" y="520.25" width="8.75" height="8.05" fill="#ffffff" />
<rect x="11.25" y="520.75" width="8.25" height="7.55" fill="#ededef" />
<path d="M14 524.6 L17 522.4 L17 526.8 Z" fill="#000"/>
<rect x="20.75" y="520.25" width="9.75" height="8.85" fill="#909090" />
<rect x="20.75" y="520.25" width="8.95" height="8.05" fill="#ffffff" />
<rect x="21.25" y="520.75" width="8.45" height="7.55" fill="#e8e8ec" />
<rect x="779.40" y="520.30" width="10.80" height="11.10" fill="#fbfbfb" />
<path d="M779.9 529.6 V521.2 H788.4" stroke="#d4d4d4" stroke-width="0.8" fill="none"/>
<path d="M783.6 531 L789.9 524.7 M785.6 531 L789.9 526.7 M787.6 531 L789.9 528.7" stroke="#9c9c9c" stroke-width="0.6" fill="none"/>
<rect x="779.20" y="529.00" width="1.70" height="0.90" fill="#606060" />
<rect x="787.90" y="520.70" width="0.90" height="1.20" fill="#606060" />
</g>
</svg>
</body>
</html>
